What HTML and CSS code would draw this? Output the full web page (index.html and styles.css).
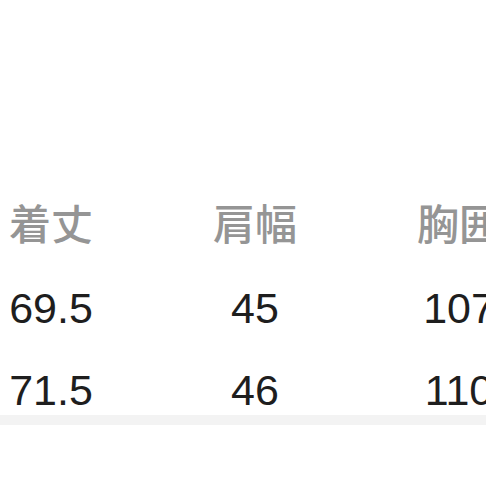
FILE: index.html
```html
<!DOCTYPE html>
<html lang="ja">
<head>
<meta charset="utf-8">
<link rel="stylesheet" href="styles.css">
</head>
<body>
<div class="page">
  <div class="table">
    <div class="row head">
      <div class="cell">着丈</div>
      <div class="cell">肩幅</div>
      <div class="cell">胸囲</div>
    </div>
    <div class="row">
      <div class="cell">69.5</div>
      <div class="cell">45</div>
      <div class="cell">107</div>
    </div>
    <div class="row last">
      <div class="cell">71.5</div>
      <div class="cell">46</div>
      <div class="cell">110</div>
    </div>
  </div>
  <div class="band"></div>
</div>
</body>
</html>
```
FILE: styles.css
```css
html, body {
  margin: 0;
  padding: 0;
  background: #ffffff;
  overflow: hidden;
}
.page {
  width: 486px;
  height: 486px;
  overflow: hidden;
}
.table {
  padding-top: 198px;
  margin-left: -51px;
  width: 612px;
}
.row {
  display: grid;
  grid-template-columns: 204px 204px 204px;
  height: 48px;
  line-height: 48px;
  margin-bottom: 34px;
  font-family: "Liberation Sans", Arial, sans-serif;
  font-size: 43px;
  color: #1e1e1e;
}
.row.head {
  font-family: "Noto Sans CJK JP", "Noto Sans CJK SC", sans-serif;
  font-size: 42px;
  font-weight: 500;
  color: #959595;
  margin-bottom: 38px;
}
.row.last {
  margin-bottom: 1px;
}
.cell {
  text-align: center;
  white-space: nowrap;
}
.band {
  height: 10px;
  background: #f3f3f3;
}
```
